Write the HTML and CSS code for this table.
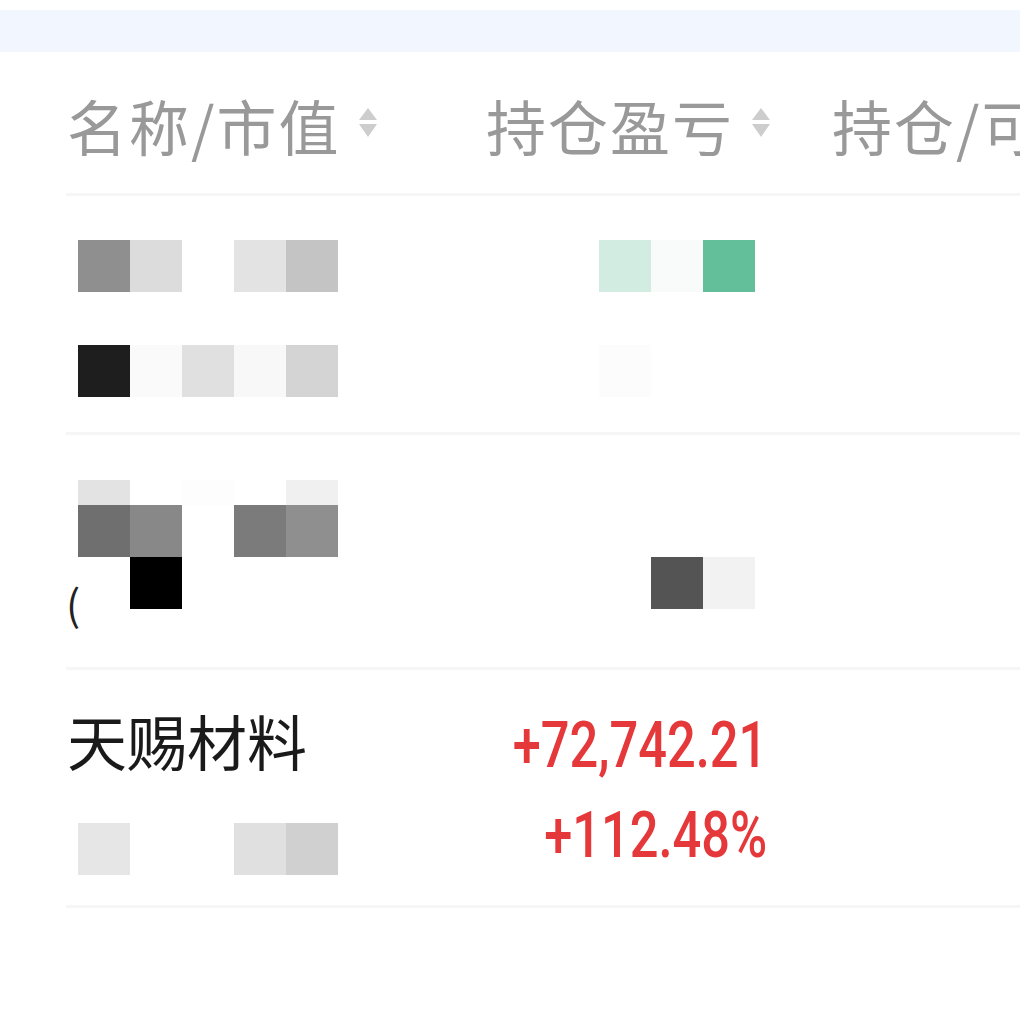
FILE: index.html
```html
<!DOCTYPE html>
<html lang="zh-CN">
<head>
  <meta charset="UTF-8" />
  <meta name="viewport" content="width=device-width, initial-scale=1.0"/>
  <title>持仓</title>
  <link rel="stylesheet" href="styles.css">
</head>
<body>
  <div class="top-band"></div>

  <div class="table">
    <!-- header -->
    <div class="row head">
      <div class="th">名称/市值<svg class="sort" viewBox="0 0 20 32"><path d="M10 1 L19 13 H1 Z"/><path d="M1 17 H19 L10 30 Z"/></svg></div>
      <div class="th">持仓盈亏<svg class="sort" viewBox="0 0 20 32"><path d="M10 1 L19 13 H1 Z"/><path d="M1 17 H19 L10 30 Z"/></svg></div>
      <div class="th">持仓/可用</div>
    </div>

    <!-- row 1 -->
    <div class="row r1">
      <div class="cell">
        <div class="mosaic"><i class="c8f"></i><i class="cdc"></i><i></i><i class="ce3"></i><i class="cc4"></i></div>
        <div class="mosaic"><i class="c1e"></i><i class="cfa"></i><i class="ce0"></i><i class="cf8"></i><i class="cd4"></i></div>
      </div>
      <div class="cell right">
        <div class="mosaic"><i class="g1"></i><i class="g2"></i><i class="g3"></i></div>
        <div class="mosaic"><i class="cfc"></i><i></i><i></i></div>
      </div>
      <div class="cell"></div>
    </div>

    <!-- row 2 -->
    <div class="row r2">
      <div class="cell tight">
        <div class="mosaic strip"><i class="ce3"></i><i></i><i class="cfd"></i><i></i><i class="cf0"></i></div>
        <div class="mosaic"><i class="c6f"></i><i class="c88"></i><i></i><i class="c7b"></i><i class="c8f"></i></div>
        <div class="mosaic paren"><span class="par">(</span><i></i><i class="c00"></i></div>
      </div>
      <div class="cell right low">
        <div class="mosaic"><i></i><i class="c54"></i><i class="cf2"></i></div>
      </div>
      <div class="cell"></div>
    </div>

    <!-- row 3 -->
    <div class="row r3">
      <div class="cell">
        <div class="name">天赐材料</div>
        <div class="mosaic"><i class="ce6"></i><i></i><i></i><i class="ce0"></i><i class="cd0"></i></div>
      </div>
      <div class="cell right nums">
        <div class="num up">+72,742.21</div>
        <div class="num up">+112.48%</div>
      </div>
      <div class="cell"></div>
    </div>
  </div>
</body>
</html>
```

FILE: styles.css
```css
body {
  margin: 0;
  padding: 0;
  background-color: #fff;
  font-family: "Noto Sans CJK SC", "Noto Sans", sans-serif;
  overflow: hidden;
  width: 1020px;
  height: 1024px;
}

.top-band {
  margin-top: 10px;
  height: 42px;
  background-color: #f2f6fe;
}

.table {
  margin-left: 66px;
}

.row {
  display: grid;
  grid-template-columns: 419px 346px 1fr;
  border-bottom: 3px solid #f6f6f6;
  box-sizing: border-box;
  white-space: nowrap;
}

.row.head {
  height: 144px;
  padding-top: 43px;
}

.row.r1 { height: 239px; }
.row.r2 { height: 235px; }
.row.r3 { height: 238px; }

.th {
  display: flex;
  align-items: flex-start;
  font-size: 60px;
  line-height: 60px;
  letter-spacing: 2px;
  color: #999;
  padding-left: 1px;
}

.sort {
  width: 22px;
  height: 32px;
  margin-left: 16px;
  margin-top: 12px;
  fill: #cdcdcd;
}

.cell {
  padding-top: 44px;
  display: flex;
  flex-direction: column;
  gap: 53px;
}

.cell.right {
  align-items: flex-end;
  padding-right: 76px;
}

.cell.tight {
  padding-top: 45px;
  gap: 0;
}

.cell.low {
  padding-top: 122px;
}

.mosaic {
  display: flex;
  height: 52px;
  padding-left: 12px;
}

.mosaic i {
  display: block;
  width: 52px;
  height: 52px;
}

.mosaic.strip {
  height: 25px;
}

.mosaic.strip i {
  height: 25px;
}

.mosaic.paren {
  padding-left: 0;
  align-items: flex-start;
}

.par {
  width: 12px;
  font-size: 42px;
  line-height: 52px;
  color: #222;
  padding-top: 20px;
}

.name {
  font-size: 60px;
  line-height: 60px;
  color: #1a1a1a;
  padding-left: 1px;
  margin-top: -4px;
  margin-bottom: 0;
}

.cell.nums {
  padding-top: 50px;
  padding-right: 64px;
  gap: 38px;
}

.num {
  font-family: Roboto, "Liberation Sans", sans-serif;
  font-size: 64px;
  line-height: 52px;
  font-weight: 500;
  transform: scaleX(0.79);
  transform-origin: right center;
}

.num.up {
  color: #e5383b;
}

/* mosaic shades */
.c00 { background: #000; }
.c1e { background: #1e1e1e; }
.c54 { background: #545454; }
.c6f { background: #6f6f6f; }
.c7b { background: #7b7b7b; }
.c88 { background: #888; }
.c8f { background: #8f8f8f; }
.cc4 { background: #c4c4c4; }
.cd0 { background: #d0d0d0; }
.cd4 { background: #d4d4d4; }
.cdc { background: #dcdcdc; }
.ce0 { background: #e0e0e0; }
.ce3 { background: #e3e3e3; }
.ce6 { background: #e6e6e6; }
.cf0 { background: #f0f0f0; }
.cf2 { background: #f2f2f2; }
.cf8 { background: #f8f8f8; }
.cfa { background: #fafafa; }
.cfc { background: #fcfcfc; }
.cfd { background: #fdfdfd; }
.g1 { background: #d3ece2; }
.g2 { background: #f9fbfa; }
.g3 { background: #62bf99; }
```
